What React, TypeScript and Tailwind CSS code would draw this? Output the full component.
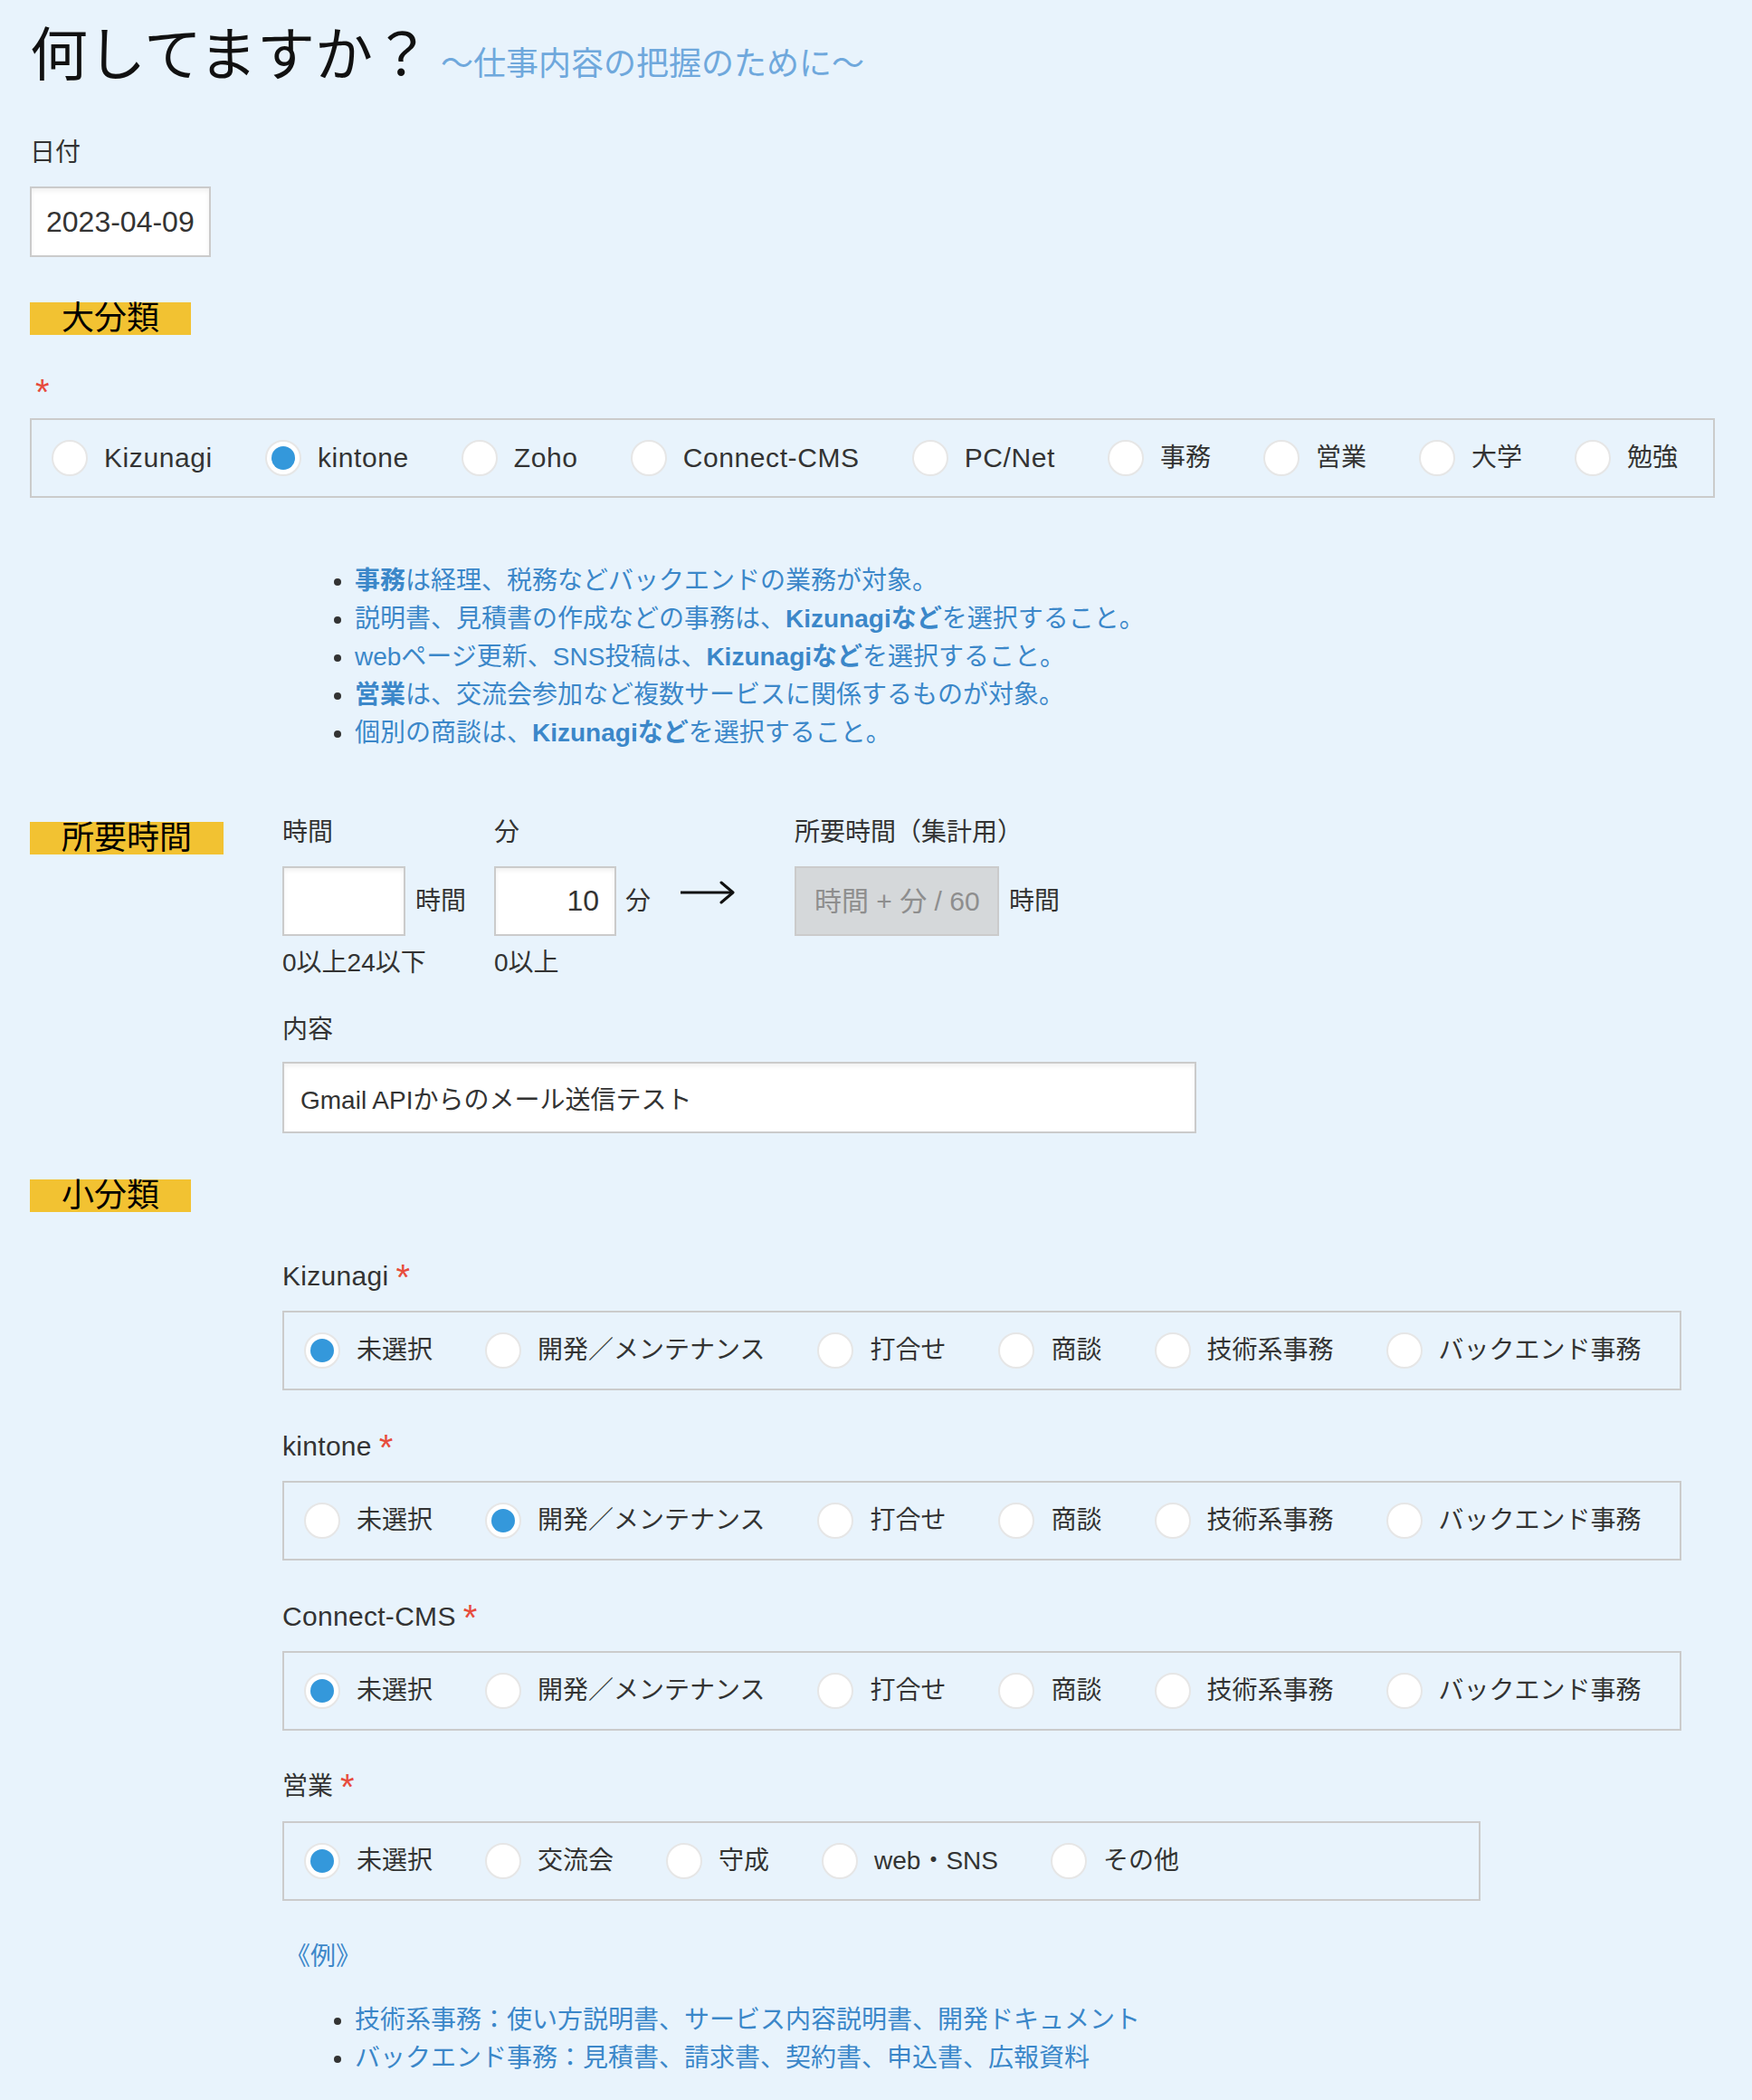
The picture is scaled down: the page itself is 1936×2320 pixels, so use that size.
import React from "react";

const font = "font-['Liberation_Sans','Noto_Sans_CJK_JP',sans-serif]";

const isLatin = (s: string) => /^[\x00-\x7F]+$/.test(s);

type Opt = { label: string; checked?: boolean };

function Radio({ label, checked }: Opt) {
  return (
    <label className="flex items-center shrink-0">
      <span className="w-10 h-10 rounded-full bg-white border-2 border-[#e6e6e6] flex items-center justify-center">
        {checked && <span className="w-[26px] h-[26px] rounded-full bg-[#3498db]" />}
      </span>
      <span
        className={`ml-[18px] leading-[40px] text-[#333] ${
          isLatin(label) ? "text-[30px] tracking-[0.6px]" : "text-[28px]"
        }`}
      >
        {label}
      </span>
    </label>
  );
}

function RadioBox({ options, width }: { options: Opt[]; width: string }) {
  return (
    <div className={`flex items-center gap-[58px] h-[88px] border-2 border-[#cbcbcb] pl-[22px] ${width}`}>
      {options.map((o) => (
        <Radio key={o.label} {...o} />
      ))}
    </div>
  );
}

function Badge({ children, className = "" }: { children: React.ReactNode; className?: string }) {
  return (
    <div className={`inline-block h-[36px] px-[35px] bg-[#f2c232] text-[36px] leading-[36px] text-black ${className}`}>
      {children}
    </div>
  );
}

const Req = () => (
  <span className="ml-[8px] text-[40px] leading-none text-[#e74c3c] align-[-5px]">*</span>
);

const sub = ["未選択", "開発／メンテナンス", "打合せ", "商談", "技術系事務", "バックエンド事務"];

const subGroups = [
  { name: "Kizunagi", sel: 0 },
  { name: "kintone", sel: 1 },
  { name: "Connect-CMS", sel: 0 },
];

function GroupLabel({ name }: { name: string }) {
  return (
    <div className="h-[40px] leading-[40px] overflow-visible">
      <span className={isLatin(name) ? "text-[30px] tracking-[0.3px]" : "text-[28px]"}>{name}</span>
      <Req />
    </div>
  );
}

export default function App() {
  return (
    <div className={`min-h-screen bg-[#e8f3fc] px-[33px] pt-[24px] pb-[30px] text-[#333] ${font}`}>
      {/* Header */}
      <div className="flex items-baseline">
        <h1 className="text-[64px] leading-[74px] text-[#111]">何してますか？</h1>
        <span className="ml-[11px] text-[36px] text-[#6fa8dc]">～仕事内容の把握のために～</span>
      </div>

      <div className="mt-[51px] text-[28px] leading-[40px]">日付</div>
      <input
        readOnly
        value="2023-04-09"
        className="mt-[17px] block w-[200px] h-[78px] border-2 border-[#cbcbcb] bg-white pl-[16px] text-[32px] text-[#333] shadow-[inset_0_3px_5px_rgba(0,0,0,0.06)] outline-none"
      />

      {/* 大分類 */}
      <Badge className="mt-[50px]">大分類</Badge>
      <div className="mt-[42px] h-[40px] leading-[40px]">
        <span className="ml-[6px] text-[40px] leading-none text-[#e74c3c]">*</span>
      </div>
      <div className="mt-[9px]">
        <RadioBox
          width="w-[1862px]"
          options={[
            { label: "Kizunagi" },
            { label: "kintone", checked: true },
            { label: "Zoho" },
            { label: "Connect-CMS" },
            { label: "PC/Net" },
            { label: "事務" },
            { label: "営業" },
            { label: "大学" },
            { label: "勉強" },
          ]}
        />
      </div>

      <ul className="mt-[71px] pl-[359px] list-disc text-[28px] leading-[42px] text-[#3b87c9] marker:text-[#333]">
        <li><b className="font-bold">事務</b>は経理、税務などバックエンドの業務が対象。</li>
        <li>説明書、見積書の作成などの事務は、<b className="font-bold">Kizunagiなど</b>を選択すること。</li>
        <li>webページ更新、SNS投稿は、<b className="font-bold">Kizunagiなど</b>を選択すること。</li>
        <li><b className="font-bold">営業</b>は、交流会参加など複数サービスに関係するものが対象。</li>
        <li>個別の商談は、<b className="font-bold">Kizunagiなど</b>を選択すること。</li>
      </ul>

      {/* 所要時間 */}
      <div className="mt-[69px] flex">
        <div className="w-[279px] shrink-0">
          <Badge className="mt-[8px]">所要時間</Badge>
        </div>
        <div className="flex-1">
          <div className="flex text-[28px] leading-[40px]">
            <div>
              <div>時間</div>
              <div className="mt-[17px] flex items-center">
                <input
                  readOnly
                  value=""
                  className="w-[136px] h-[77px] border-2 border-[#cbcbcb] bg-white shadow-[inset_0_3px_5px_rgba(0,0,0,0.06)] outline-none"
                />
                <span className="ml-[11px]">時間</span>
              </div>
              <div className="mt-[10px]">0以上24以下</div>
            </div>
            <div className="ml-[31px]">
              <div>分</div>
              <div className="mt-[17px] flex items-center">
                <input
                  readOnly
                  value="10"
                  className="w-[135px] h-[77px] border-2 border-[#cbcbcb] bg-white pr-[17px] text-right text-[32px] text-[#333] shadow-[inset_0_3px_5px_rgba(0,0,0,0.06)] outline-none"
                />
                <span className="ml-[10px]">分</span>
              </div>
              <div className="mt-[10px]">0以上</div>
            </div>
            <svg className="ml-[33px] mt-[73px]" width="60" height="26" viewBox="0 0 60 26" fill="none">
              <path d="M0 13H58" stroke="#111" strokeWidth="3" />
              <path d="M45 2L58 13L45 24" stroke="#111" strokeWidth="3" strokeLinecap="round" strokeLinejoin="round" />
            </svg>
            <div className="ml-[66px]">
              <div>所要時間（集計用）</div>
              <div className="mt-[17px] flex items-center">
                <div className="w-[226px] h-[77px] border-2 border-[#cbcbcb] bg-[#d5d8da] pl-[20px] flex items-center text-[30px] text-[#8e8e8e]">
                  時間 + 分 / 60
                </div>
                <span className="ml-[11px]">時間</span>
              </div>
            </div>
          </div>

          <div className="mt-[34px] text-[28px] leading-[40px]">内容</div>
          <input
            readOnly
            value="Gmail APIからのメール送信テスト"
            className="mt-[15px] block w-[1010px] h-[79px] border-2 border-[#cbcbcb] bg-white pl-[18px] text-[28px] text-[#333] shadow-[inset_0_3px_5px_rgba(0,0,0,0.06)] outline-none"
          />
        </div>
      </div>

      {/* 小分類 */}
      <Badge className="mt-[51px]">小分類</Badge>

      <div className="ml-[279px]">
        {subGroups.map((g, gi) => (
          <div key={g.name} className={gi === 0 ? "mt-[50px]" : "mt-[42px]"}>
            <GroupLabel name={g.name} />
            <div className="mt-[18px]">
              <RadioBox
                width="w-[1546px]"
                options={sub.map((s, i) => ({ label: s, checked: i === g.sel }))}
              />
            </div>
          </div>
        ))}

        <div className="mt-[42px]">
          <GroupLabel name="営業" />
          <div className="mt-[18px]">
            <RadioBox
              width="w-[1324px]"
              options={[
                { label: "未選択", checked: true },
                { label: "交流会" },
                { label: "守成" },
                { label: "web・SNS" },
                { label: "その他" },
              ]}
            />
          </div>
        </div>

        <div className="mt-[42px] ml-[3px] text-[28px] leading-[40px] text-[#3b87c9]">《例》</div>
        <ul className="mt-[29px] pl-[80px] list-disc text-[28px] leading-[42px] text-[#3b87c9] marker:text-[#333]">
          <li>技術系事務：使い方説明書、サービス内容説明書、開発ドキュメント</li>
          <li>バックエンド事務：見積書、請求書、契約書、申込書、広報資料</li>
        </ul>
      </div>
    </div>
  );
}
